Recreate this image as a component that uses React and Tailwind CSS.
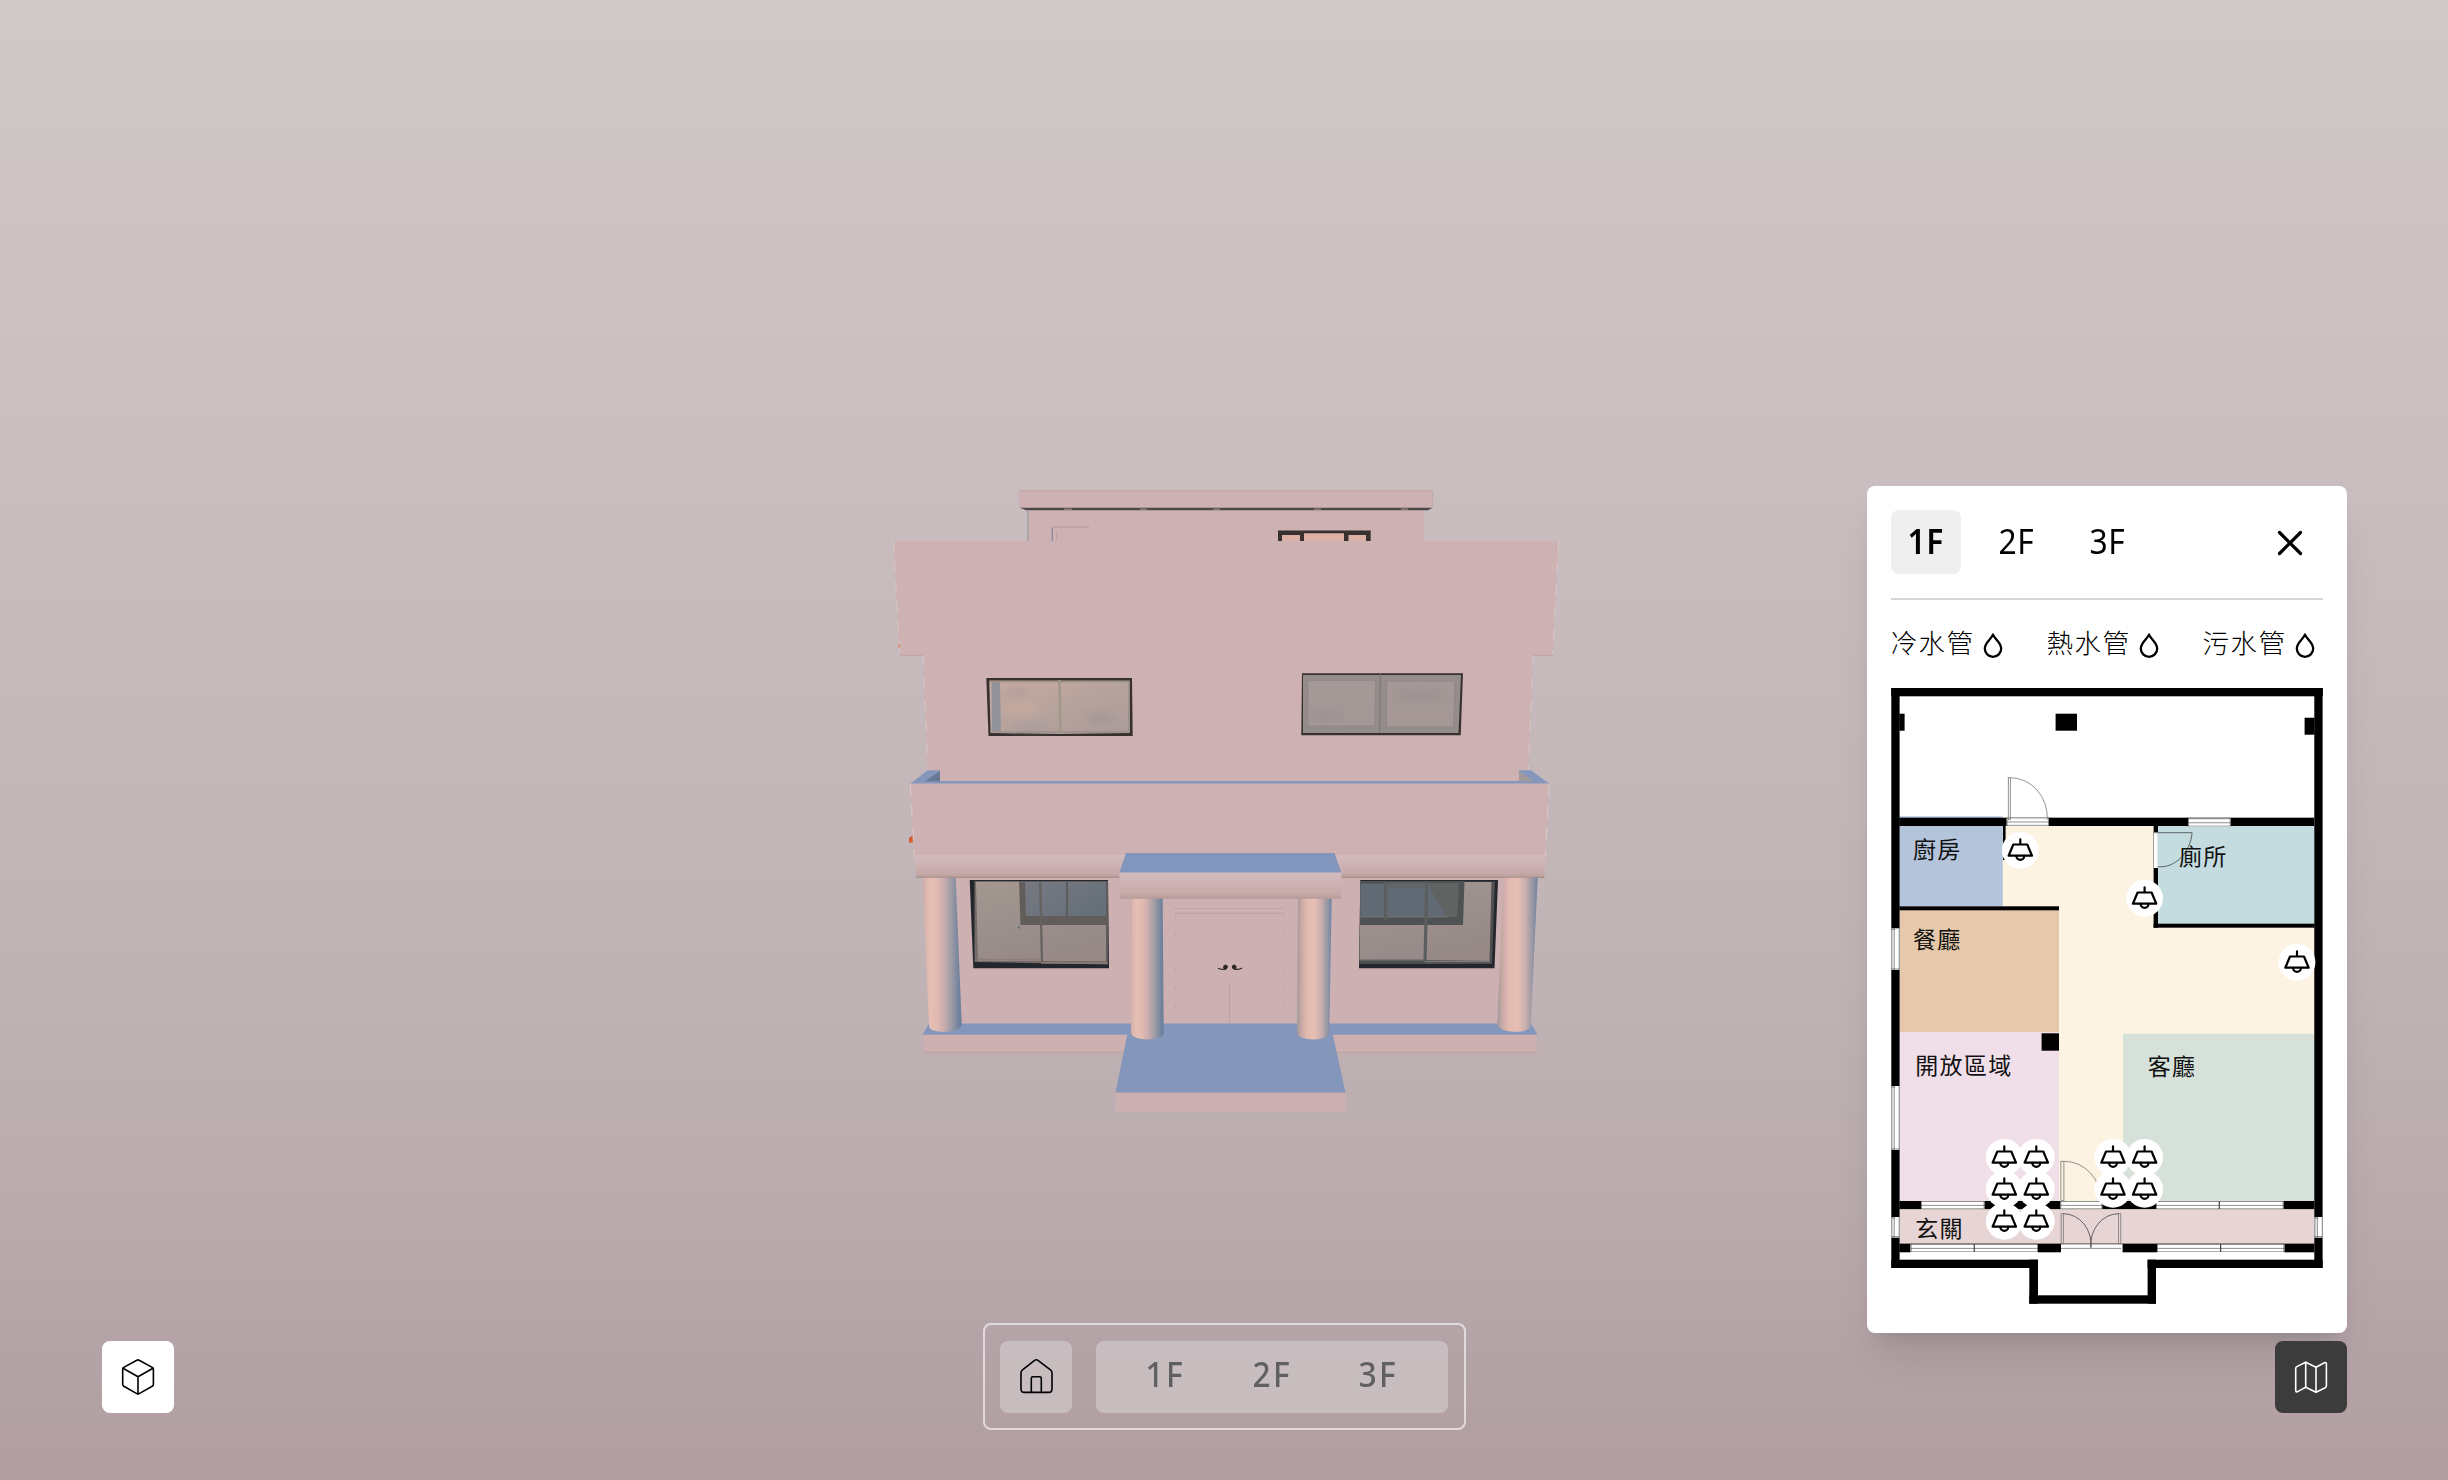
const LAMPS = [
  [2020, 850.3], [2144.3, 898.3], [2296.7, 962.3],
  [2004, 1157.3], [2036, 1157.3], [2112.7, 1157.3], [2144.3, 1157.3],
  [2004, 1189.3], [2036, 1189.3], [2112.7, 1189.3], [2144.3, 1189.3],
  [2004, 1221.3], [2036, 1221.3],
];

const ROOMS = [
  ["廚房", 1912.7, 858], ["廁所", 2178.7, 865.3], ["餐廳", 1912.7, 947.5],
  ["開放區域", 1915, 1073.5], ["客廳", 2147.5, 1075], ["玄關", 1915, 1237.3],
];

// [x, y, width, height]
const WALLS = [
  [1891, 688, 431.5, 8.3], [1891, 688, 8.3, 580], [2314, 688, 8.3, 580],
  [1899, 713.7, 5.3, 17], [2055.3, 713.7, 21.4, 17], [2304.3, 717.7, 10, 17],
  [1899, 817.7, 415, 8.3], [2153.3, 826, 4.4, 101.7], [2153.3, 923.7, 161, 4],
  [2002.7, 826, 2.6, 34], [1899, 906.3, 159.7, 4], [2041.3, 1033.3, 17.4, 17.4],
  [1899, 1201, 415, 8.2], [1899, 1244, 11.3, 8.3], [2037.7, 1244, 23, 8.3],
  [2122.3, 1244, 34.4, 8.3], [2284, 1244, 30, 8.3],
  [1891, 1259.7, 146.7, 8.3], [2147.3, 1259.7, 175, 8.3],
  [2029, 1259.7, 8.7, 44], [2147.3, 1259.7, 8.4, 44], [2029, 1295.3, 126.7, 8.4],
];

function Lamp({ x, y }) {
  return (
    <g transform={`translate(${x} ${y})`} fill="none" stroke="#000" strokeWidth="2.2" strokeLinecap="round" strokeLinejoin="round">
      <circle r="18.4" fill="#fff" stroke="none" />
      <path d="M0-11V-6.2M-7-5.8H7L11.7 5.4H-11.7Z" />
      <path d="M-3.9 5.6a3.9 3.9 0 0 0 7.8 0" />
    </g>
  );
}

function WideWindow({ x, y, w, h, split }) {
  return (
    <g>
      <rect x={x} y={y} width={w} height={h} fill="#fff" />
      <g fill="none" stroke="#444" strokeWidth="0.6">
        <path d={`M${x} ${y + 0.5}h${w}M${x} ${y + h * 0.55}h${w}`} />
        <path d={`M${x} ${y + h - 0.5}h${w}`} stroke="#777" />
        <path d={`M${x + 0.5} ${y}v${h}M${x + w - 0.5} ${y}v${h}`} />
        {split && <path d={`M${split} ${y}v${h}`} strokeWidth="1.2" />}
      </g>
    </g>
  );
}

function SideWindow({ x, y, h }) {
  return (
    <g>
      <rect x={x} y={y} width="8.5" height={h} fill="#fff" />
      <path d={`M${x + 0.7} ${y}v${h}M${x + 3} ${y}v${h}M${x + 8} ${y}v${h}`} stroke="#888" strokeWidth="1" />
      <path d={`M${x} ${y + 1}h4M${x} ${y + h - 1}h8`} stroke="#555" strokeWidth="0.7" />
    </g>
  );
}

function FloorPlan() {
  return (
    <svg viewBox="1890.7 688 432 616" className="block h-[616px] w-[432px]">
      <rect x="1899" y="816.3" width="103.5" height="90" fill="#b4c4da" />
      <rect x="2002.7" y="817" width="311.3" height="384.5" fill="#fcf3e3" />
      <rect x="2157.5" y="826" width="156.5" height="98" fill="#c4dce0" />
      <rect x="1899" y="910" width="159.7" height="122" fill="#e6c9aa" />
      <rect x="1899" y="1032" width="159.7" height="169.5" fill="#f0dfe8" />
      <rect x="2122.7" y="1033.7" width="191.3" height="168" fill="#d5e1d9" />
      <rect x="1899" y="1208" width="415" height="3" fill="#fcf3e3" />
      <rect x="1899" y="1210" width="415" height="34" fill="#e7d5d5" />
      <path d="M1899 1243.9H2314" stroke="#333" strokeWidth="0.8" />
      {WALLS.map(([x, y, w, h], i) => <rect key={i} x={x} y={y} width={w} height={h} />)}

      <WideWindow x={2006.3} y={817.4} w={42.4} h={8.4} />
      <WideWindow x={2187.7} y={818.2} w={42.7} h={8.3} />
      <WideWindow x={1920.7} y={1201} w={63.6} h={8} />
      <WideWindow x={2060} y={1201} w={42} h={8} />
      <WideWindow x={2155.7} y={1201} w={127.6} h={8} split={2219} />
      <WideWindow x={1910.3} y={1244} w={127.4} h={8} split={1974} />
      <WideWindow x={2156.7} y={1244} w={127.3} h={8} split={2220.3} />
      <SideWindow x={1890.9} y={928.3} h={41.7} />
      <SideWindow x={1890.9} y={1086} h={64} />
      <SideWindow x={1890.9} y={1217} h={20.7} />
      <SideWindow x={2314} y={1217} h={20.7} />

      <g fill="none" stroke="#777" strokeWidth="0.8">
        <rect x="2008" y="777.7" width="2" height="42" />
        <path d="M2010 777.7a37 40 0 0 1 37 42" />
        <rect x="2060.6" y="1161.3" width="3" height="39.5" />
        <path d="M2064 1161.3a37 40 0 0 1 37 40" />
        <path d="M2060.7 1248.4H2121" />
        <rect x="2060.8" y="1213.7" width="2.2" height="30" />
        <rect x="2118.3" y="1213.7" width="2.2" height="30" />
        <path d="M2063 1213.7a28 31 0 0 1 27.7 34M2118.3 1213.7a28 31 0 0 0-27.7 34" stroke="#444" />
      </g>
      <rect x="2153.6" y="832" width="4" height="36" fill="#fff" />
      <path d="M2153.5 832.7H2191.8C2190 852 2176 868 2157.5 866.8" fill="none" stroke="#444" strokeWidth="0.8" />

      <g fontSize="23" letterSpacing="1.3" className="font-['Noto_Sans_CJK_TC',sans-serif]" fill="#111">
        {ROOMS.map(([name, x, y]) => <text key={name} x={x} y={y}>{name}</text>)}
      </g>
      {LAMPS.map(([x, y], i) => <Lamp key={i} x={x} y={y} />)}
    </svg>
  );
}

function House() {
  return (
    <svg viewBox="0 0 2448 1480" className="absolute inset-0 h-[1480px] w-[2448px]">
      <defs>
        <linearGradient id="colLeft">
          <stop offset="0" stopColor="#c5a8a8" /><stop offset=".08" stopColor="#d9b5ae" />
          <stop offset=".2" stopColor="#e6beb3" /><stop offset=".38" stopColor="#e0b9b1" />
          <stop offset=".55" stopColor="#c9adad" /><stop offset=".75" stopColor="#9c9aa6" />
          <stop offset=".92" stopColor="#74849d" /><stop offset="1" stopColor="#6a7d99" />
        </linearGradient>
        <linearGradient id="colRight">
          <stop offset="0" stopColor="#9c9799" /><stop offset=".1" stopColor="#c3a6a3" />
          <stop offset=".27" stopColor="#e0b9af" /><stop offset=".5" stopColor="#e7bfb5" />
          <stop offset=".7" stopColor="#c9aead" /><stop offset=".87" stopColor="#9897a4" />
          <stop offset="1" stopColor="#6e82a5" />
        </linearGradient>
        <linearGradient id="cornice" x2="0" y2="1">
          <stop offset="0" stopColor="#d3bbbd" /><stop offset=".5" stopColor="#cdb1b2" />
          <stop offset=".8" stopColor="#c6aaa9" /><stop offset="1" stopColor="#b69b98" />
        </linearGradient>
        <linearGradient id="glassWarm" x2="1" y2="1">
          <stop offset="0" stopColor="#c9aba0" /><stop offset=".5" stopColor="#b6a39d" /><stop offset="1" stopColor="#ab9b98" />
        </linearGradient>
        <linearGradient id="glassLow" x2=".4" y2="1">
          <stop offset="0" stopColor="#a39790" /><stop offset="1" stopColor="#968988" />
        </linearGradient>
        <linearGradient id="glassSky" x2="1" y2=".6">
          <stop offset="0" stopColor="#777981" /><stop offset="1" stopColor="#66707a" />
        </linearGradient>
        <filter id="soft" x="-50%" y="-100%" width="200%" height="300%"><feGaussianBlur stdDeviation="5" /></filter>
      </defs>

      {/* rooftop level */}
      <path d="M1027.5 508H1423.5V545H1027.5Z" fill="#ceb2b3" />
      <path d="M1027.8 511V541" stroke="#9498a6" strokeWidth="1" />
      <path d="M1019 490.3H1432.7V508H1019Z" fill="#ceb2b3" />
      <path d="M1019 490.6H1432.7V508" fill="none" stroke="#bfa5a4" strokeWidth=".8" />
      <path d="M1020 507.7H1432.5L1428 510.2H1026Z" fill="#4e4949" />
      <path d="M1064 509.3h8M1140 509.3h7M1213 509.3h7M1314 509.3h7M1401 509.3h7" stroke="#8b7a79" strokeWidth="1.6" />
      <path d="M1052.3 541V527H1089" fill="none" stroke="#b8a0a3" strokeWidth="1.4" />
      <path d="M1052.3 541V528" stroke="#8188a0" strokeWidth="1" />
      <path d="M1056.6 541V531" stroke="#baa1a3" strokeWidth=".8" />
      <path d="M1278 530.6H1370.7V541H1278Z" fill="#37302e" />
      <path d="M1282 535h18v6h-18zM1304 533.2h40v8h-40zM1348.5 535h17.5v6h-17.5z" fill="#dab0a7" />

      {/* upper storey */}
      <path d="M893.3 541H1558.7L1552.7 655.5H1533.3L1528.3 771V784H928L922.7 655.5H899.7Z" fill="#ceb2b3" />
      <path d="M893.6 541L899.7 655" stroke="#d8c5c5" strokeWidth="1" strokeDasharray="12 8" />
      <path d="M1558.7 541L1552.7 655M1533.3 656L1528.3 770M923 656L928 770" stroke="#d8c8c8" strokeWidth="1" strokeDasharray="10 12" />
      <path d="M899.7 655.3H922.7M1533.3 655.3H1552.7" stroke="#baa1a0" strokeWidth=".9" />
      <ellipse cx="899" cy="646" rx="1" ry="2.2" fill="#dc8e78" />

      <path d="M986.3 678H1132L1132.7 736H988.5Z" fill="#37302e" />
      <path d="M989.3 680.5H1129.7L1130 733L1060 734L990.5 733Z" fill="url(#glassWarm)" />
      <path d="M991.5 682H1000L1001 731H992Z" fill="#92939a" />
      <g filter="url(#soft)" opacity=".6">
        <ellipse cx="1016" cy="693" rx="14" ry="4" fill="#a1959a" />
        <ellipse cx="1022" cy="708" rx="18" ry="7" fill="#caac9f" />
        <ellipse cx="1100" cy="718" rx="14" ry="4" fill="#968c90" />
        <ellipse cx="1030" cy="727" rx="22" ry="3" fill="#9d9399" />
      </g>
      <path d="M1059.5 680L1060.5 733" stroke="#a3988a" strokeWidth="2.8" />
      <path d="M990 732H1130M1129 682V732M990 681.8H1129" stroke="#928a80" strokeWidth="1.1" fill="none" />

      <path d="M1302 673.3H1463L1460.7 735.3H1301.3Z" fill="#37302e" />
      <path d="M1303 675H1461L1458.5 733H1303Z" fill="#958d8b" />
      <path d="M1308 680.3H1375.5L1375 726H1308Z" fill="#a59997" stroke="#918886" strokeWidth="1" />
      <path d="M1386.7 681H1455L1453.7 727H1386.3Z" fill="#a59896" stroke="#918886" strokeWidth="1" />
      <g filter="url(#soft)" opacity=".5">
        <ellipse cx="1326" cy="716" rx="18" ry="6" fill="#958d8d" />
        <ellipse cx="1420" cy="695" rx="26" ry="5" fill="#968c8d" />
      </g>
      <path d="M1380.5 674L1379.5 733" stroke="#7f7977" strokeWidth="1.3" />

      {/* balcony band */}
      <path d="M927.7 770.3H940V781H1519V770.3H1531L1549.7 784H910Z" fill="#8496bc" />
      <path d="M940 771V781.3H925Z" fill="#697892" />
      <path d="M1519 771L1534 781.3H1519Z" fill="#a2999f" />
      <path d="M909 842.5V838L912.8 835V842.7Z" fill="#d65d35" />
      <path d="M910 783.5H1549.7L1545.5 856H914Z" fill="#ceb2b3" />
      <path d="M910.3 784L914.3 856M1549.3 784L1545.3 856" stroke="#dacaca" strokeWidth="1" strokeDasharray="12 10" />

      {/* ground storey */}
      <path d="M945 877H1515V1024H945Z" fill="#cdb1b2" />
      <path d="M914 855H1545.5L1544.3 877.7H916Z" fill="url(#cornice)" />
      <path d="M916 877.3H1544" stroke="#a28c8a" strokeWidth="1" />

      <path d="M969.7 880H1108L1109 968.3H973.3Z" fill="#23262d" />
      <path d="M974.5 881H1107.3V964.5L974.5 962Z" fill="#746a66" />
      <path d="M976 882H1107L1107.5 961H978Z" fill="url(#glassLow)" />
      <path d="M1019 881H1107.5V925H1020.5Z" fill="#625d5b" />
      <path d="M1025 882H1107V916H1026Z" fill="url(#glassSky)" />
      <path d="M1067 882V918M1107 882V962" stroke="#5e5c5a" strokeWidth="2" />
      <path d="M1040.2 882L1042 963" stroke="#65615e" strokeWidth="2.2" />
      <path d="M1019 926.5v2" stroke="#5b6c80" strokeWidth="2" />
      <path d="M977 959.5H1040M1041 963H1108" stroke="#8d7d74" strokeWidth="1.5" />

      <path d="M1360.3 880H1498L1494.5 968.3H1359Z" fill="#23262d" />
      <path d="M1360.5 881.5H1495L1492 964H1359.5Z" fill="#4c4e4f" />
      <path d="M1360.5 882H1491.5L1489.5 961L1359.5 959Z" fill="url(#glassLow)" />
      <path d="M1360.3 881H1464.5L1463 925H1360Z" fill="#4e5253" />
      <path d="M1360.5 883.5H1458L1457 917H1360.5Z" fill="#606974" />
      <path d="M1427 883H1459L1457 917H1447Z" fill="#616362" />
      <path d="M1388 882.5H1427V888H1388Z" fill="#62646a" />
      <path d="M1360 916.8H1448" stroke="#6f7272" strokeWidth="1.2" />
      <path d="M1385.5 882V920M1426.8 882L1425 963" stroke="#5b5e5d" strokeWidth="3.2" />
      <path d="M1359.5 959.8H1424M1426 961.5H1490" stroke="#7b7876" strokeWidth="1.4" />

      {/* entrance doors */}
      <path d="M1173 908.5H1285M1175 913.4H1284.7" stroke="#bba7ad" strokeWidth="1.1" />
      <path d="M1175.5 914V1023M1284 914V1023" stroke="#bfa5a8" strokeWidth=".8" strokeDasharray="4 14" />
      <path d="M1229.4 983V1023" stroke="#b4a0a7" strokeWidth="1" />
      <g fill="#2b2727" stroke="#2b2727">
        <circle cx="1225.5" cy="967" r="1.9" /><circle cx="1234.2" cy="967" r="1.9" />
        <path d="M1226 969Q1221 970 1218 968.3M1234 969Q1239 970 1242 968" fill="none" strokeWidth="1.3" />
      </g>

      {/* base and ramp */}
      <path d="M929 1023.5H1531L1537.5 1035H922.5Z" fill="#8496bc" />
      <path d="M923 1034.7H1537L1536.5 1052.7H923.5Z" fill="#cdb0b1" />
      <path d="M923.5 1052.3H1536.5" stroke="#baa09f" strokeWidth=".9" />
      <path d="M1127.5 1033H1332.5L1345.5 1092.5H1115.5Z" fill="#8496b9" />
      <path d="M1115.5 1092.3H1345.5V1112H1115.5Z" fill="#ccb0b1" />
      <path d="M1115.5 1092.3H1345.5" stroke="#9c9db5" strokeWidth=".8" />

      {/* porch roof and columns */}
      <path d="M922.3 877.7H955.7L961.7 1024C961.7 1034 929 1034.5 929 1026Z" fill="url(#colLeft)" />
      <path d="M1503.7 877.7H1537.7L1530.7 1026C1530 1034 1498 1034 1497.3 1024Z" fill="url(#colRight)" />
      <path d="M1129.7 898H1162.7L1163.7 1033C1163 1041.5 1132 1041.5 1131 1033Z" fill="url(#colLeft)" />
      <path d="M1298 898H1331.7L1329.3 1033C1329 1041.5 1298 1041.5 1297 1033Z" fill="url(#colRight)" />
      <path d="M1126 853H1334.5L1341.5 873H1119.3Z" fill="#8295bd" />
      <path d="M1119.3 872.5H1341.5L1341 898.7H1120Z" fill="url(#cornice)" />
    </svg>
  );
}

const DropIcon = () => (
  <svg viewBox="0 0 20 25" className="h-[25px] w-[20px]" fill="none" stroke="#000" strokeWidth="2.3" strokeLinejoin="round">
    <path d="M10 1.5C8.6 6 1.8 9.5 1.8 15.6a8.2 8.2 0 0 0 16.4 0C18.2 9.5 11.4 6 10 1.5Z" />
  </svg>
);

function Icon({ children }) {
  return (
    <svg viewBox="0 0 72 72" className="size-[72px]" fill="none" stroke="currentColor" strokeWidth="1.6" strokeLinecap="round" strokeLinejoin="round">
      {children}
    </svg>
  );
}

export default function App() {
  return (
    <div className="relative h-[1480px] w-[2448px] overflow-hidden bg-[linear-gradient(to_bottom,#d1c8ca_0%,#c9bdbf_33%,#c2b5b8_60%,#bcaeb0_76%,#b6a6a9_88%,#b09da0_100%)] font-['Noto_Sans','Noto_Sans_CJK_TC',sans-serif] text-black">
      <House />
      <div className="relative grid h-full grid-cols-[1fr_auto_1fr] items-end px-[101.5px] pb-[50px]">
        <button className="mb-[17px] size-[72px] rounded-[8px] bg-white">
          <Icon>
            <path d="M34.8 19.2Q36 18.5 37.2 19.2L50.2 26.4Q51.4 27.1 51.4 28.4V43.2Q51.4 44.6 50.2 45.3L37.2 52.6Q36 53.3 34.8 52.6L21.8 45.3Q20.7 44.6 20.7 43.2V28.4Q20.7 27.1 21.8 26.4Z" />
            <path d="M21 27.2L36 35.8L51 27.2M36 35.8V53" />
          </Icon>
        </button>

        <nav className="flex gap-6 rounded-[8px] border-2 border-white/60 p-[15.5px]">
          <button className="size-[72px] rounded-[8px] bg-[#d4cfd0]/60">
            <Icon>
              <path d="M34.3 19.6Q36.3 18 38.3 19.6L50.5 28.8Q52 30 52 31.8V48Q52 51.4 48.6 51.4H24.4Q21 51.4 21 48V31.8Q21 30 22.5 28.8Z" />
              <path d="M31.3 51.4V37.4Q31.3 35.8 32.9 35.8H39.7Q41.3 35.8 41.3 37.4V51.4" />
            </Icon>
          </button>
          <div className="flex h-[72px] w-[352px] items-center justify-center rounded-[8px] bg-[#d4cfd0]/60 pb-[5px] text-[34.5px] font-medium tracking-[2.5px] text-[#606060]">
            {["1F", "2F", "3F"].map((floor) => (
              <button key={floor} className="w-[106.5px] scale-x-[0.92] text-center">{floor}</button>
            ))}
          </div>
        </nav>

        <div className="mb-[17px] flex flex-col items-end gap-2 justify-self-end">
          <section className="flex h-[847px] w-[480px] flex-col rounded-[8px] bg-white px-6 pt-6 shadow-[0_30px_38px_-8px_rgba(0,0,0,0.1),0_12px_15px_-9px_rgba(0,0,0,0.1)]">
            <header className="flex h-[90px] items-start border-b-2 border-[#d3d8dc] text-[34.5px] tracking-[0.5px]">
              <div className="flex gap-[21px]">
                <button className="h-16 w-[70px] rounded-[8px] bg-[#efefef] pb-[2px] font-semibold">
                  <span className="inline-block scale-x-[0.92]">1F</span>
                </button>
                <button className="h-16 w-[70px] pb-[2px]">
                  <span className="inline-block scale-x-[0.92]">2F</span>
                </button>
                <button className="h-16 w-[70px] pb-[2px]">
                  <span className="inline-block scale-x-[0.92]">3F</span>
                </button>
              </div>
              <button className="ml-auto flex h-[65px] w-[65px] items-center justify-center">
                <svg viewBox="0 0 26 26" className="size-[26px]" stroke="#000" strokeWidth="3.2" strokeLinecap="round">
                  <path d="M2.5 2.5L23.5 23.5M23.5 2.5L2.5 23.5" />
                </svg>
              </button>
            </header>
            <div className="flex h-[88px] items-center gap-[46px] text-[26.5px] font-light tracking-[1.5px]">
              {["冷水管", "熱水管", "污水管"].map((name) => (
                <button key={name} className="flex w-[110px] shrink-0 items-center gap-[8.5px] whitespace-nowrap">
                  {name}
                  <span className="pt-[2px]"><DropIcon /></span>
                </button>
              ))}
            </div>
            <FloorPlan />
          </section>
          <button className="size-[72px] rounded-[8px] bg-[#3c3c3c] text-white">
            <Icon>
              <path d="M30.7 21.2L21.8 25.6Q20.7 26.2 20.7 27.4V49.3Q20.7 51.5 22.6 50.6L30.7 46.3L41 51.3L50.2 46.7Q51.4 46 51.4 44.8V23Q51.4 20.8 49.4 21.7L41 26.3Z" />
              <path d="M30.7 21.2V46.3M41 26.3V51.3" />
            </Icon>
          </button>
        </div>
      </div>
    </div>
  );
}
